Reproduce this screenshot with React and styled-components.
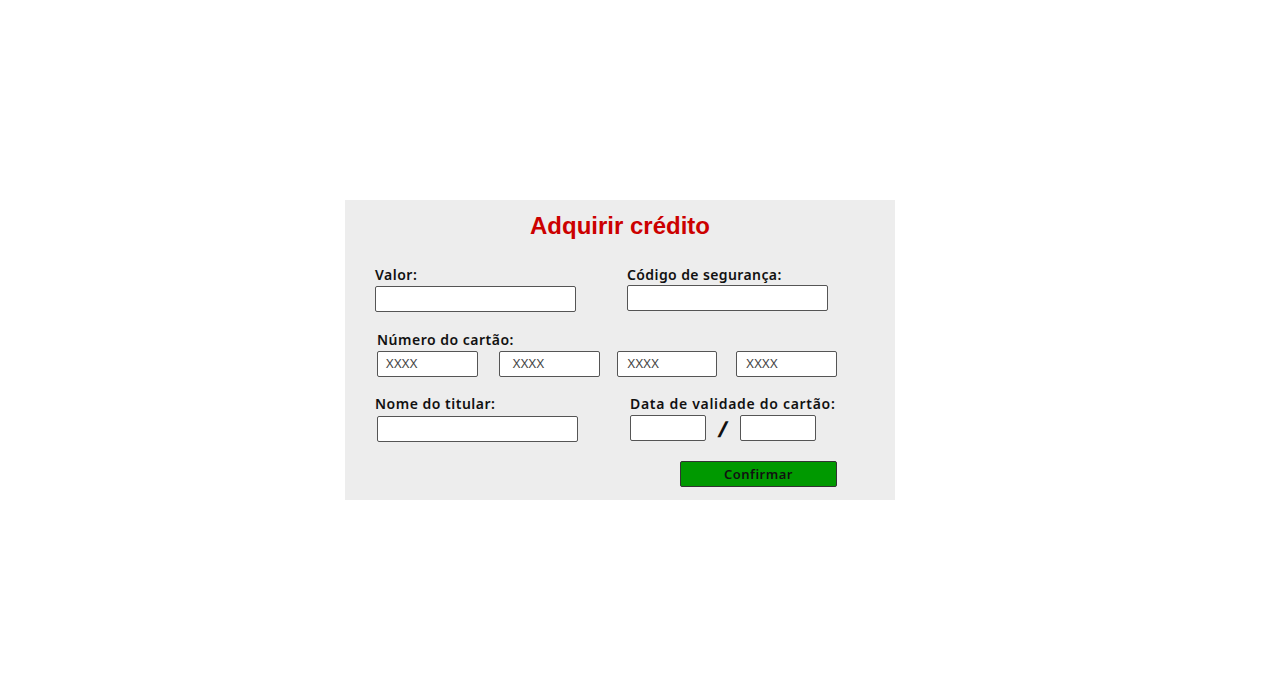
import React from "react";
import styled, { createGlobalStyle } from "styled-components";

const Global = createGlobalStyle`
  html, body { margin: 0; padding: 0; background: #ffffff; }
  body { font-family: "Noto Sans", "DejaVu Sans", sans-serif; }
`;

const Page = styled.div`
  width: 1270px;
  height: 696px;
  padding: 200px 0 0 345px;
  box-sizing: border-box;
`;

const Panel = styled.div`
  width: 550px;
  height: 300px;
  background: #ededed;
  box-sizing: border-box;
  padding: 12px 0 0 30px;
  display: flex;
  flex-direction: column;
`;

const Title = styled.h1`
  margin: 0 0 0 -30px;
  width: 550px;
  text-align: center;
  font-family: "Liberation Sans", Arial, sans-serif;
  font-size: 24px;
  font-weight: 700;
  line-height: 28px;
  color: #cc0000;
`;

const Row = styled.div`
  display: flex;
  align-items: flex-start;
  margin-top: ${(p) => p.$top}px;
  padding-left: ${(p) => p.$indent || 0}px;
`;

const Field = styled.div`
  display: flex;
  flex-direction: column;
  width: ${(p) => p.$width}px;
  margin-left: ${(p) => p.$shift || 0}px;
`;

const Label = styled.label`
  font-family: "Noto Sans", "DejaVu Sans", sans-serif;
  font-size: 14px;
  font-weight: 600;
  letter-spacing: ${(p) => p.$ls || 0.5}px;
  line-height: 18px;
  height: 18px;
  color: #111;
  white-space: nowrap;
  margin-bottom: 2px;
`;

const Input = styled.div`
  width: ${(p) => p.$width}px;
  height: 26px;
  box-sizing: border-box;
  background: #ffffff;
  border: 1.5px solid #555;
  border-radius: 2px;
  margin-left: ${(p) => p.$shift || 0}px;
  margin-top: ${(p) => p.$drop || 0}px;
  font-family: "Noto Sans", "DejaVu Sans", sans-serif;
  font-size: 13px;
  color: #444;
  line-height: 23px;
  padding-left: ${(p) => p.$pad || 8}px;
  letter-spacing: 0.3px;
`;

const Inputs = styled.div`
  display: flex;
  align-items: center;
`;

const Slash = styled.span`
  width: 34px;
  text-align: center;
  font-family: "Noto Sans", "DejaVu Sans", sans-serif;
  font-size: 22px;
  font-weight: 700;
  line-height: 26px;
  color: #111;
  transform: skewX(-8deg);
`;

const Button = styled.button`
  width: 157px;
  height: 26px;
  margin-left: 305px;
  background: #009900;
  border: 1.5px solid #333;
  border-radius: 2px;
  font-family: "Noto Sans", "DejaVu Sans", sans-serif;
  font-size: 13px;
  font-weight: 600;
  letter-spacing: 0.5px;
  color: #111;
  padding: 0;
`;

const cardGroups = [
  { shift: 0, pad: 8 },
  { shift: 21, pad: 13 },
  { shift: 17, pad: 10 },
  { shift: 19, pad: 9 },
];

export default function App() {
  return (
    <>
      <Global />
      <Page>
        <Panel>
          <Title>Adquirir crédito</Title>
          <Row $top={26}>
            <Field $width={200}>
              <Label>Valor:</Label>
              <Input $width={201} />
            </Field>
            <Field $width={200} $shift={52}>
              <Label $ls={0.4}>Código de segurança:</Label>
              <Input $width={201} $drop={-1} />
            </Field>
          </Row>
          <Row $top={19} $indent={2}>
            <Field $width={460}>
              <Label>Número do cartão:</Label>
              <Inputs>
                {cardGroups.map((g, i) => (
                  <Input key={i} $width={101} $shift={g.shift} $pad={g.pad}>
                    XXXX
                  </Input>
                ))}
              </Inputs>
            </Field>
          </Row>
          <Row $top={18}>
            <Field $width={202}>
              <Label>Nome do titular:</Label>
              <Input $width={201} $shift={2} $drop={1} />
            </Field>
            <Field $width={210} $shift={53}>
              <Label $ls={0.7}>Data de validade do cartão:</Label>
              <Inputs>
                <Input $width={76} />
                <Slash>/</Slash>
                <Input $width={76} />
              </Inputs>
            </Field>
          </Row>
          <Row $top={19}>
            <Button>Confirmar</Button>
          </Row>
        </Panel>
      </Page>
    </>
  );
}
